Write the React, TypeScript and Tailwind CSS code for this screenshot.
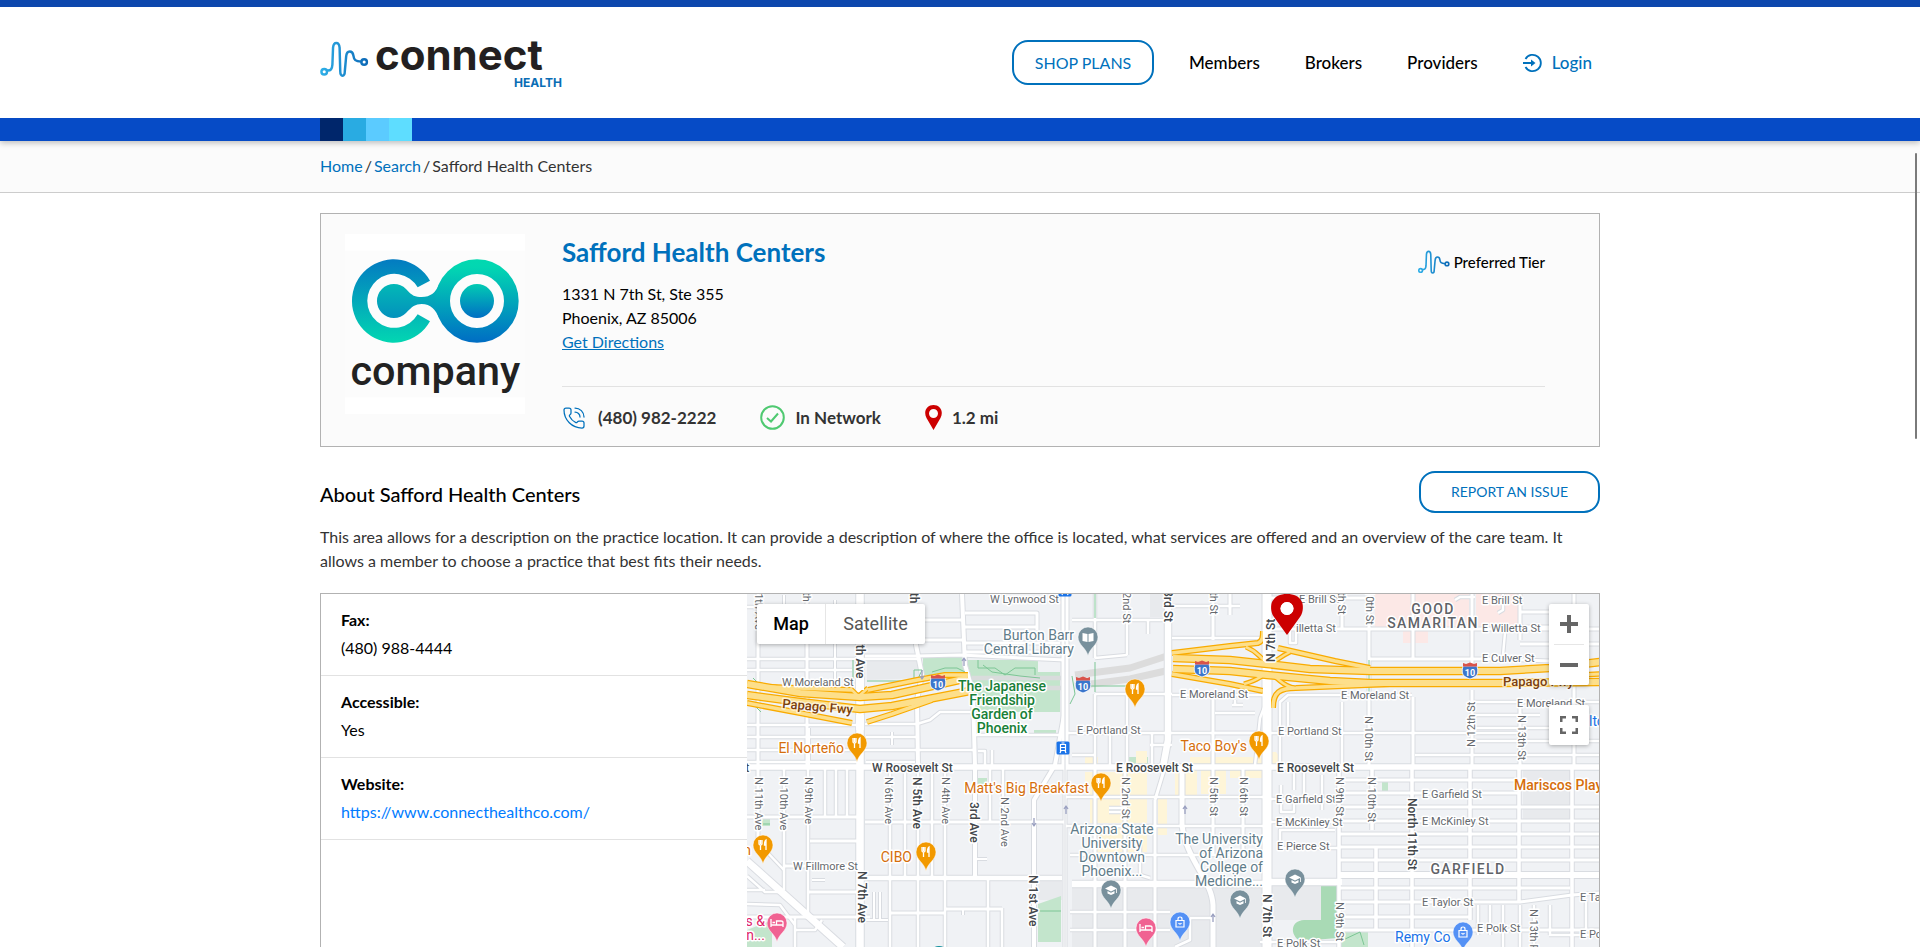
import { PhoneCall } from "lucide-react";

function Wave({ className, id }: { className: string; id: string }) {
  return (
    <svg viewBox="18 26 148 110" className={className} fill="none" aria-hidden="true">
      <defs>
        <linearGradient id={id} gradientUnits="userSpaceOnUse" x1="18" y1="0" x2="166" y2="0">
          <stop offset="0" stopColor="#2fb0e8" />
          <stop offset="1" stopColor="#0b67b5" />
        </linearGradient>
      </defs>
      <g stroke={`url(#${id})`} strokeWidth="7.5" strokeLinecap="round">
        <circle cx="30" cy="120" r="8.500" />
        <circle cx="152" cy="90" r="8.500" />
        <path d="M39 116 C50 117 54 112 55 98 L57 46 C58 36 61 32 67 32 C73 32 76 36 77 46 L79 118 C79 128 81 132 86 132 C91 132 93 128 93 118 L97 74 C98 62 103 58 108 58 C115 58 118 63 119 70 C121 84 125 88 143 89" />
      </g>
    </svg>
  );
}

function CompanyLogo() {
  return (
    <svg viewBox="15 12 540 540" className="size-[180px] shrink-0" role="img" aria-label="Company logo">
      <defs>
        <linearGradient id="down" gradientUnits="userSpaceOnUse" x1="0" y1="88" x2="0" y2="338">
          <stop offset="0" stopColor="#037bc1" />
          <stop offset="1" stopColor="#02d6b2" />
        </linearGradient>
        <linearGradient id="up" gradientUnits="userSpaceOnUse" x1="0" y1="88" x2="0" y2="338">
          <stop offset="0" stopColor="#02d9b0" />
          <stop offset="0.1" stopColor="#02d6b2" />
          <stop offset="1" stopColor="#006dc4" />
        </linearGradient>
        <linearGradient id="dot" gradientUnits="userSpaceOnUse" x1="0" y1="160" x2="0" y2="266">
          <stop offset="0" stopColor="#02cdb3" />
          <stop offset="1" stopColor="#006dc4" />
        </linearGradient>
        <linearGradient id="bridge" gradientUnits="userSpaceOnUse" x1="0" y1="150" x2="0" y2="276">
          <stop offset="0" stopColor="#03bdb6" />
          <stop offset="1" stopColor="#038dbd" />
        </linearGradient>
      </defs>
      <rect x="15" y="12" width="540" height="540" fill="#fff" />
      <rect x="15" y="62" width="540" height="440" fill="#fcfcfc" />
      <path d="M270 152 A125 125 0 1 0 270 274 L233 253 A81 81 0 1 1 233 172 Z" fill="url(#down)" />
      <path
        d="M198 177 C216 198 226 201 245 201 C272 201 288 186 296 164 L300 213 L296 262 C288 240 272 222 245 222 C226 222 216 230 198 249 A51 51 0 1 1 198 177 Z"
        fill="url(#bridge)"
      />
      <circle cx="411" cy="213" r="103" fill="none" stroke="url(#up)" strokeWidth="44" />
      <circle cx="411" cy="213" r="51" fill="url(#dot)" />
      <text x="286" y="464" textAnchor="middle" fontSize="124" className="fill-[#222] font-[Roboto] font-medium">
        company
      </text>
    </svg>
  );
}

type Road = [d: string, width: number];

const roads: Road[] = [
  // avenues west of Central
  ["M758 594V767M758 767V852", 3],
  ["M807 594V767", 3],
  ["M784 767V890M808 767V917M825 767V817M836 767V817M847 767V817", 2.5],
  ["M784 595V640M835 600V680M809 728V767M892 732V745", 2],
  ["M890 767V947M905 767V878M918 767V947M932 767V878M945 767V947M990 767V822M1003 767V822M988 878V947M1002 908V947", 2.5],
  ["M915 594L916 645L922 675L917 700L918 767", 4],
  ["M962 594L965 665L973 692L975 767V878", 4],
  ["M747 607H915M747 659H917M747 670H852M747 725H860M747 737H852M747 750H975M747 762H860", 2.5],
  ["M917 620H962M917 640H962M965 613H1037V630M965 627H1037M965 643H1060M965 652H1065M865 656H917L960 655L1065 660", 3],
  ["M865 724H917L930 720L940 712H975M975 735H1060M866 737H917M866 762H915M992 750V767M978 751H985V767", 2.5],
  ["M747 817H860M865 822H1065M810 841H860M785 866H860M808 892H860M747 917H870M890 913H945M945 909H1002", 3],
  ["M860 878H1062", 4.5],
  ["M747 876L765 892H782M747 890H765M747 904L780 905L795 925M765 850L784 870M795 917V947M795 930H815L822 920", 2.5],
  ["M747 861L843 947", 7],
  ["M862 920H888M874 892V920M880 892V920M812 880H825M963 915V909H990M977 859H987", 2],
  // downtown
  ["M1072 620H1168M1148 620V634M1127 594V655M1127 655L1095 658M1065 733H1340M1340 733H1520M1152 733V765M1095 594V658", 2.5],
  ["M1095 694V767M1127 694V767M1095 694H1172M1072 755H1095M1150 745H1172M1110 733V767", 2.5],
  ["M1034 947V800L1055 765L1065 710", 4],
  ["M1065 767V947M1095 767V947M1125 767V947M1155 800V947M1155 800L1165 767", 3],
  ["M1065 797H1267M1065 826H1267M1070 855H1267M1109 808H1127M1109 812H1127M1070 912H1170M1070 930H1170M1140 845V875L1150 878", 2.5],
  ["M1072 884H1267M1267 882H1342", 6.5],
  ["M1182 767L1182 825C1186 860 1212 880 1213 905V947", 5],
  ["M1213 594V640M1213 695V767M1213 767V855M1243 767V855M1230 594V615", 3],
  ["M1172 638H1260M1172 606H1240M1172 695H1267M1215 713H1255M1215 733H1262M1235 700V705M1232 705H1243M1255 765L1260 718L1267 700", 2.5],
  // east side grid
  ["M1342 594V630M1369 594V767M1413 594V660M1413 697V767M1472 594V670M1472 690V767M1520 594V640M1574 594V767M1520 702V767", 3],
  ["M1267 598H1375M1267 629H1599M1369 659H1500L1549 661M1520 612H1560M1520 627H1560M1520 644H1599", 3],
  ["M1280 767V702L1288 695H1412M1342 702V767M1288 702V730M1472 702H1600M1472 715H1540M1472 728H1549M1472 741H1600M1415 755H1600", 2.5],
  ["M1339 767V947M1372 767V830M1376 847V930M1412 767V947M1470 767V920M1519 767V902M1572 767V902M1572 767V947", 3.5],
  ["M1339 780H1519M1339 793H1519M1339 807H1600M1339 821H1600M1339 834H1600M1339 847H1600M1339 860H1600M1339 888H1570M1339 902H1520L1572 895L1600 893M1339 917H1470M1339 930H1600", 3],
  ["M1339 875H1600", 6],
  ["M1267 799H1339M1267 822H1339M1280 848H1339M1280 848V830H1335M1322 775V810M1304 767V795M1281 785V812H1294V795M1294 767V790", 2.5],
  ["M1478 905V935M1490 905V935M1503 905V947M1520 905V947M1534 905V947M1550 905V935M1586 900V930M1260 942H1340M1549 935H1600M1190 918H1213M1190 918V940L1175 947", 2.5],
  ["M1503 594V610L1498 613M1455 600L1460 597H1475M1505 633L1503 655M1290 630V643H1296V630", 2.5],
  // main arteries
  ["M747 767H1600", 5.5],
  ["M860 594V947", 7.5],
  ["M1065 594V767", 7],
  ["M1168 594V740L1163 767", 6.5],
  ["M1267 594V947", 9],
];

const freeways: Road[] = [
  ["M747 684L800 693L860 697L892 695L968 678", 6],
  ["M747 695L800 702L860 709L892 706L975 690", 6],
  ["M747 703L800 713L852 723", 3.5],
  ["M867 722L892 714L932 700", 3.5],
  ["M770 687L852 690M868 690L917 680L945 675L968 675", 3.5],
  ["M860 695L868 688M860 698L850 688", 2.5],
  ["M1172 653L1230 646L1258 643C1263 641 1263 636 1263 631", 3.5],
  ["M1172 674L1230 684L1263 691", 3.5],
  ["M1278 648L1300 653L1335 661L1370 668", 3.5],
  ["M1273 708C1273 692 1280 688 1296 688L1390 684", 3.5],
  ["M1246 647C1258 652 1258 656 1264 660M1244 684C1258 680 1258 678 1264 675M1290 652C1282 656 1280 658 1275 661M1275 677C1282 682 1284 686 1294 688", 2.5],
  ["M1173 658L1230 660L1267 664L1310 669L1370 671H1500L1550 668L1600 662", 6],
  ["M1173 669L1230 671L1267 675L1330 681L1370 683H1500L1600 682", 6],
  ["M1560 676L1600 674", 3],
];

const areas: [string, string][] = [
  ["#e8eaed", "M867 658H917L921 678L867 680ZM1072 885H1267V947H1072ZM1269 886H1321V920H1269ZM1523 770H1571V819H1523ZM1038 880H1062V900H1038ZM1150 594H1165V617H1150Z"],
  ["#c3e5cc", "M923 657H962L970 675H923ZM967 660H1038V672H1060V712H975L972 690ZM977 778H987V784H977ZM762 819H770V826H762ZM1038 904L1061 896V942H1038ZM1127 757H1148V764H1127ZM1382 782H1388V792H1382ZM1341 931H1368V947H1341ZM747 930L772 920V947H747ZM1034 730H1056V734H1034Z"],
  ["#a9dab5", "M1321 886H1338V938L1300 941C1290 935 1290 921 1304 920H1321Z"],
  ["#fce8e6", "M1375 594H1469V627H1375ZM1476 594H1520V626H1476ZM1403 631H1428V643H1403Z"],
  ["#fef5d8", "M1085 772H1147V795H1085ZM1090 799H1147V823H1090ZM1095 828H1147V852H1095ZM1158 796H1167V835H1158ZM1175 770H1197V795H1175ZM1201 770H1226V794H1201ZM1230 770H1262V778H1230ZM1190 757H1262V764H1190ZM1276 752H1272V764H1285ZM1085 757H1098V764H1085ZM1136 751H1147V763H1136Z"],
];

type Label = [text: string, x: number, y: number];
const smallLabels: Label[] = [
  ["W Lynwood St", 990, 603], ["W Moreland St", 782, 686], ["E Portland St", 1077, 734],
  ["E Moreland St", 1180, 698], ["E Moreland St", 1341, 699], ["E Moreland St", 1517, 707],
  ["E Portland St", 1278, 735], ["E Brill St", 1299, 603], ["illetta St", 1296, 632],
  ["E Brill St", 1482, 604], ["E Willetta St", 1482, 632], ["E Culver St", 1482, 662],
  ["W Fillmore St", 793, 870], ["E Garfield St", 1276, 803], ["E McKinley St", 1276, 826],
  ["E Pierce St", 1277, 850], ["E Garfield St", 1422, 798], ["E McKinley St", 1422, 825],
  ["E Taylor St", 1422, 906], ["E Polk St", 1477, 932], ["E Polk St", 1277, 947], ["E Taylor St", 1580, 901], ["E Polk St", 1580, 938],
];
const smallVertical: Label[] = [
  ["N 11th Ave", 755, 777], ["N 10th Ave", 780, 777], ["N 9th Ave", 805, 777], ["N 6th Ave", 885, 777],
  ["N 4th Ave", 942, 777], ["N 2nd Ave", 1001, 797], ["2nd St", 1123, 592], ["N 2nd St", 1122, 777],
  ["N 5th St", 1210, 777], ["N 6th St", 1240, 777], ["N 9th St", 1336, 777], ["N 10th St", 1368, 777],
  ["5th St", 1210, 586], ["9th St", 1338, 586], ["10th St", 1366, 590], ["N 10th St", 1365, 716], ["N 13th St", 1518, 715],
  ["N 9th St", 1336, 902], ["N 13th Pl", 1530, 909], ["11th Ave", 755, 587], ["9th", 803, 586],
];
const mainLabels: Label[] = [["W Roosevelt St", 872, 772], ["E Roosevelt St", 1116, 772], ["E Roosevelt St", 1277, 772], ["St", 738, 772]];
const mainVertical: Label[] = [
  ["7th Ave", 856, 638], ["N 5th Ave", 913, 777], ["3rd Ave", 970, 802], ["N 7th Ave", 858, 871], ["N 1st Ave", 1029, 875],
  ["3rd St", 1164, 590], ["N 7th St", 1263, 894], ["North 11th St", 1408, 798], ["5th", 910, 586],
];

type Tone = "food" | "school" | "hotel" | "shop" | "library";
const tones: Record<Tone, string> = { food: "#f29900", school: "#78909c", hotel: "#f06292", shop: "#5491f5", library: "#78909c" };
const glyphs: Record<Tone, React.ReactNode> = {
  food: <path d="M-4-5v3.5q0 1.500 1.500 1.500V5M-1-5v3.500q0 1.500-1.500 1.500M-2.500-5v4M3 5V-5q-1.500 1-1.500 5H3" stroke="#fff" strokeWidth="1.300" fill="none" />,
  school: <path d="M-6-1.500L0-4.500L6-1.500L0 1.500ZM-3.500 1V3.500L0 5L3.500 3.500V1L0 2.800ZM5.200-1h.8V3h-.8Z" fill="#fff" />,
  hotel: <path d="M-6-4V4M-6 2H6M6 4V-.5Q6-2 4-2H-.5V2M-4.500-.5h2.500" stroke="#fff" strokeWidth="1.300" fill="none" />,
  shop: <path d="M-4-1.500H4V5H-4ZM-2-1.500V-3Q-2-5 0-5T2-3V-1.500M-1.500 1.200Q0 3 1.500 1.200" stroke="#fff" strokeWidth="1.200" fill="none" />,
  library: <path d="M-5.500-4L-.5-3V5L-5.500 4ZM5.500-4L.5-3V5L5.500 4Z" fill="#fff" />,
};
const markers: [Tone, number, number][] = [
  ["library", 1088, 637], ["food", 1135, 689], ["food", 857, 743], ["food", 1259, 741], ["food", 1101, 783],
  ["food", 763, 845], ["food", 926, 852], ["school", 1111, 890], ["school", 1295, 879], ["school", 1240, 900],
  ["shop", 1180, 922], ["hotel", 777, 923], ["hotel", 1146, 928], ["shop", 1463, 932],
];

type Poi = { fill: string; anchor: "start" | "middle" | "end"; x: number; y: number; lines: string[]; bold?: boolean };
const pois: Poi[] = [
  { fill: "#5f7c8a", anchor: "end", x: 1074, y: 640, lines: ["Burton Barr", "Central Library"] },
  { fill: "#188038", anchor: "middle", x: 1002, y: 691, lines: ["The Japanese", "Friendship", "Garden of", "Phoenix"], bold: true },
  { fill: "#d56e0c", anchor: "end", x: 844, y: 753, lines: ["El Norteño"] },
  { fill: "#d56e0c", anchor: "end", x: 1247, y: 751, lines: ["Taco Boy's"] },
  { fill: "#d56e0c", anchor: "end", x: 1089, y: 793, lines: ["Matt's Big Breakfast"] },
  { fill: "#d56e0c", anchor: "end", x: 912, y: 862, lines: ["CIBO"] },
  { fill: "#d56e0c", anchor: "end", x: 751, y: 855, lines: ["n"] },
  { fill: "#d56e0c", anchor: "start", x: 1514, y: 790, lines: ["Mariscos Playa"], bold: true },
  { fill: "#5f7c8a", anchor: "middle", x: 1112, y: 834, lines: ["Arizona State", "University", "Downtown", "Phoenix..."] },
  { fill: "#5f7c8a", anchor: "end", x: 1263, y: 844, lines: ["The University", "of Arizona", "College of", "Medicine..."] },
  { fill: "#e0246a", anchor: "end", x: 765, y: 926, lines: ["s &", "Inn..."] },
  { fill: "#1a73e8", anchor: "start", x: 1395, y: 942, lines: ["Remy Co"] },
  { fill: "#1a73e8", anchor: "start", x: 1589, y: 726, lines: ["lto"] },
];

const shields: [number, number][] = [[938, 683], [1083, 685], [1202, 669], [1470, 671]];
const stations: [number, number][] = [[1065, 590], [1063, 748]];

function StreetMap() {
  return (
    <svg
      viewBox="747 594 852 353"
      preserveAspectRatio="xMinYMin slice"
      className="absolute inset-0 size-full font-[Roboto]"
      role="img"
      aria-label="Street map of Phoenix"
    >
      <rect x="747" y="594" width="852" height="800" fill="#f0f2f5" />
      {areas.map(([fill, d]) => <path key={fill} d={d} fill={fill} />)}
      <g fill="none" strokeLinejoin="round">
        <path d="M1075 675L1130 668L1170 655M1075 686L1130 679L1170 670" stroke="#dcdcdc" strokeWidth="7" />
        <path d="M972 678H1062M972 688H1062" stroke="#d9dcdc" strokeWidth="4.5" />
        <g stroke="#d9dce1">{roads.map(([d, w], i) => <path key={i} d={d} strokeWidth={w + 2} />)}</g>
        <g stroke="#fff">{roads.map(([d, w], i) => <path key={i} d={d} strokeWidth={w} />)}</g>
        <path
          d="M853 660V680M867 681H917L922 670H914V679M932 672L945 668L957 668L965 672M978 660V668H995L1005 675L1015 668H1035V675M1072 676L1075 694L1070 704M1095 594V618M1095 662V692M1082 686H1127M753 678L760 685M755 706L761 712M1369 660V695M1039 911H1061M762 824H770M1343 940L1360 932L1364 945M980 700L995 705L1010 698L1035 708M983 665L992 672L1020 676L1040 678"
          stroke="#7cc695"
        />
        <g stroke="#f9ab00">{freeways.map(([d, w], i) => <path key={i} d={d} strokeWidth={w + 2.5} />)}</g>
        <g stroke="#fddf8b">{freeways.map(([d, w], i) => <path key={i} d={d} strokeWidth={w} />)}</g>
        <path d="M860 660V690M860 715V730M1267 594V661M1267 682V720" stroke="#fff" strokeWidth="8" />
        <path d="M1065 594V947" stroke="#d6d9df" />
        <path d="M922 670V678M920 676L922 679L924 676M964 666V658M962 661L964 658L966 661M1034 818V826M1032 823L1034 826L1036 823M1066 814V806M1064 809L1066 806L1068 809M1185 814V806M1183 809L1185 806L1187 809M1213 922V914M1211 917L1213 914L1215 917" stroke="#9aa0c0" strokeWidth="1.300" />
      </g>
      <g stroke="#fff" strokeWidth="3" strokeLinejoin="round" className="[paint-order:stroke]">
        <g fontSize="11" className="fill-[#65696e]">
          {smallLabels.map(([t, x, y]) => <text key={`${t}${x}${y}`} x={x} y={y}>{t}</text>)}
          {smallVertical.map(([t, x, y]) => <text key={`${t}${x}${y}`} transform={`translate(${x} ${y}) rotate(90)`}>{t}</text>)}
          <text transform="translate(1475 747) rotate(-90)">N 12th St</text>
        </g>
        <g fontSize="12" className="fill-[#43474b] font-medium">
          {mainLabels.map(([t, x, y]) => <text key={`${t}${x}${y}`} x={x} y={y}>{t}</text>)}
          {mainVertical.map(([t, x, y]) => <text key={`${t}${x}${y}`} transform={`translate(${x} ${y}) rotate(90)`}>{t}</text>)}
          <text transform="translate(1275 662) rotate(-90)">N 7th St</text>
        </g>
        <g fontSize="13" className="fill-[#7b3f10] font-medium" strokeOpacity="0.6">
          <text transform="translate(782 708) rotate(5)">Papago Fwy</text>
          <text x="1503" y="686">Papago Fwy</text>
        </g>
        {pois.map((p) => (
          <text key={`${p.x}${p.y}`} fill={p.fill} textAnchor={p.anchor} fontSize="14" className={p.bold ? "font-medium" : "font-normal"}>
            {p.lines.map((line, i) => <tspan key={line} x={p.x} y={p.y + i * 14}>{line}</tspan>)}
          </text>
        ))}
        <g fontSize="14" textAnchor="middle" className="fill-[#5f6368] font-medium tracking-widest">
          <text x="1433" y="614">GOOD</text>
          <text x="1433" y="628">SAMARITAN</text>
          <text x="1468" y="874">GARFIELD</text>
        </g>
      </g>
      {shields.map(([x, y]) => (
        <g key={x} transform={`translate(${x} ${y})`}>
          <path d="M-7-5Q-9 2-6 5Q-3 7 0 8Q3 7 6 5Q9 2 7-5Z" fill="#3b76cc" stroke="#fff" strokeWidth="0.800" />
          <path d="M-7-8L-4-7L0-8.500L4-7L7-8V-4.500H-7Z" fill="#d9534a" />
          <text y="4.500" textAnchor="middle" fontSize="9" className="fill-white font-bold">10</text>
        </g>
      ))}
      {stations.map(([x, y]) => (
        <g key={y} transform={`translate(${x} ${y})`}>
          <rect x="-6.500" y="-6.500" width="13" height="13" rx="1.500" fill="#1a73e8" />
          <path d="M-2.500-3.500H2.500V2.500H-2.500ZM-2.500-.5H2.500M-2 2.500L-3 5M2 2.500L3 5M-1.500-5H1.500" stroke="#fff" strokeWidth="1.200" fill="none" />
        </g>
      ))}
      {markers.map(([tone, x, y]) => (
        <g key={`${x}${y}`} transform={`translate(${x} ${y})`}>
          <path d="M0 19C-1.500 11-10 8-10 0A10 10 0 0 1 10 0C10 8 1.500 11 0 19Z" fill={tones[tone]} stroke="#fff" strokeOpacity="0.500" />
          {glyphs[tone]}
        </g>
      ))}
      <circle cx="939" cy="956" r="10" fill="#12909c" />
      <path fillRule="evenodd" fill="#c00" d="M1287 635L1274 617C1270 612 1271 604 1272 602C1275 596 1280 594 1287 594S1299 596 1302 602C1303 604 1304 612 1300 617ZM1287 602A6.500 6.500 0 1 0 1287 615A6.500 6.500 0 1 0 1287 602Z" />
      <circle cx="1287" cy="608.5" r="6.500" fill="#fff" />
    </svg>
  );
}

const stripes = ["bg-[#00266b]", "bg-[#29abe2]", "bg-[#5bcbff]", "bg-[#5eddff]"];

export default function App() {
  return (
    <div className="relative flex h-screen min-h-[800px] flex-col overflow-hidden bg-white font-[Lato,sans-serif] text-base leading-6 text-black">
      <header className="relative z-10 border-t-[7px] border-[#0d47ad] bg-white shadow-[0_2px_6px_rgba(0,0,0,0.25)]">
        <div className="mx-auto flex h-[111px] max-w-[1280px] items-center justify-between">
          <a href="#home" className="flex items-start gap-1.5" aria-label="Connect Health">
            <Wave id="wave-lg" className="mt-1.5 h-9 w-[49px]" />
            <span className="flex w-[187px] flex-col font-[Inter,sans-serif] font-bold">
              <span className="text-[42px] leading-10 text-[#231f20]">connect</span>
              <span className="text-right text-xs leading-4 text-[#0a6db5]">HEALTH</span>
            </span>
          </a>
          <nav className="flex items-center gap-[45px] pr-2 text-[17px] font-medium">
            <button type="button" className="-mr-2.5 h-[45px] w-[142px] rounded-2xl border-2 border-[#0071bc] text-base font-normal text-[#0071bc]">
              SHOP PLANS
            </button>
            <a href="#members">Members</a>
            <a href="#brokers">Brokers</a>
            <a href="#providers">Providers</a>
            <a href="#login" className="flex items-center gap-2.5 text-[#0071bc]">
              <svg viewBox="0 0 19 20" className="h-5 w-[19px]" fill="none" stroke="currentColor" strokeWidth="1.800" aria-hidden="true">
                <path d="M2.500 6A8.200 8.200 0 1 1 2.500 14M0 10H9" />
                <path d="M8 6.500L12.500 10L8 13.500Z" fill="currentColor" stroke="none" />
              </svg>
              Login
            </a>
          </nav>
        </div>
        <div className="bg-[#064bc6]">
          <div className="mx-auto flex h-[23px] max-w-[1280px]">
            {stripes.map((c) => <span key={c} className={`w-[23px] ${c}`} />)}
          </div>
        </div>
      </header>

      <div className="border-b border-[#ccc] bg-[#fbfbfb]">
        <nav aria-label="Breadcrumb" className="mx-auto flex h-[51px] max-w-[1280px] items-center gap-0.5 pb-0.5 text-[#333]">
          <a href="#home" className="text-[#0071bc]">Home</a>
          <span>/</span>
          <a href="#search" className="text-[#0071bc]">Search</a>
          <span>/</span>
          <span>Safford Health Centers</span>
        </nav>
      </div>

      <main className="mx-auto flex w-full max-w-[1280px] flex-1 flex-col pt-5">
        <section className="flex gap-[37px] border border-[#b2b2b2] bg-[#fbfbfb] pt-5 pr-[54px] pb-4 pl-6">
          <CompanyLogo />
          <div className="flex-1">
            <div className="flex items-start justify-between">
              <h1 className="text-[26px] leading-9 font-bold text-[#0071bc]">Safford Health Centers</h1>
              <div className="flex items-center gap-1 pt-4 text-[15px] font-medium">
                <Wave id="wave-sm" className="h-6 w-8" />
                Preferred Tier
              </div>
            </div>
            <address className="mt-2 not-italic">
              1331 N 7th St, Ste 355<br />
              Phoenix, AZ 85006<br />
              <a href="#directions" className="text-[#0071bc] underline">Get Directions</a>
            </address>
            <div className="mt-8 flex items-center gap-11 border-t border-[#e2e2e2] pt-[18px] text-[17px] font-bold text-[#333]">
              <span className="flex items-center gap-3">
                <PhoneCall className="size-6 text-[#0071bc]" strokeWidth={1.25} aria-hidden="true" />
                (480) 982-2222
              </span>
              <span className="flex items-center gap-2.5">
                <svg viewBox="0 0 25 25" className="size-[25px]" fill="none" stroke="#4fc971" strokeWidth="2" aria-hidden="true">
                  <circle cx="12.5" cy="12.5" r="11.300" />
                  <path d="M7 13L11 16.500L18 8.500" />
                </svg>
                In Network
              </span>
              <span className="flex items-center gap-2.5">
                <svg viewBox="0 0 17 25" className="h-[25px] w-[17px]" aria-hidden="true">
                  <path fillRule="evenodd" fill="#c00" d="M8.500 25L1.500 13C-2 6 2 0 8.500 0S19 6 15.500 13ZM8.500 4A4.500 4.500 0 1 0 8.500 13A4.500 4.500 0 1 0 8.500 4Z" />
                </svg>
                1.2 mi
              </span>
            </div>
          </div>
        </section>

        <section className="mt-6">
          <div className="flex items-center justify-between">
            <h2 className="pt-1 text-xl font-medium">About Safford Health Centers</h2>
            <button type="button" className="h-[42px] w-[181px] rounded-2xl border-2 border-[#0071bc] text-sm text-[#0071bc]">
              REPORT AN ISSUE
            </button>
          </div>
          <p className="mt-3 text-[#333]">
            This area allows for a description on the practice location. It can provide a description of where the office is located, what services are offered and an overview of the care team. It allows a member to choose a practice that best fits their needs.
          </p>
        </section>

        <section className="mt-5 grid min-h-0 flex-1 grid-cols-[1fr_2fr] border border-b-0 border-[#b2b2b2]">
          <dl className="leading-7 [&>div]:border-b [&>div]:border-[#e2e2e2] [&>div]:px-5 [&>div]:pt-3 [&>div]:pb-[13px] [&_dt]:font-bold">
            <div><dt>Fax:</dt><dd>(480) 988-4444</dd></div>
            <div><dt>Accessible:</dt><dd>Yes</dd></div>
            <div><dt>Website:</dt><dd><a href="https://www.connecthealthco.com/" className="text-[#007bff]">https://www.connecthealthco.com/</a></dd></div>
          </dl>
          <div className="relative overflow-hidden">
            <StreetMap />
            <div className="absolute top-2.5 left-2.5 flex h-10 rounded-xs bg-white font-[Roboto] text-lg shadow-[0_1px_4px_rgba(0,0,0,0.3)]">
              <button type="button" className="w-[69px] border-r border-[#e6e6e6] font-medium">Map</button>
              <button type="button" className="w-[99px] text-[#565656]">Satellite</button>
            </div>
            <div className="absolute top-2.5 right-2.5 flex w-10 flex-col gap-5 text-[#666]">
              <div className="flex flex-col items-center rounded-xs bg-white shadow-[0_1px_4px_rgba(0,0,0,0.3)]">
                <button type="button" aria-label="Zoom in" className="flex size-10 items-center justify-center">
                  <svg viewBox="0 0 18 18" className="size-[18px]" fill="currentColor" aria-hidden="true"><path d="M7 0h4v7h7v4h-7v7H7v-7H0V7h7Z" /></svg>
                </button>
                <span className="h-px w-[30px] bg-[#e6e6e6]" />
                <button type="button" aria-label="Zoom out" className="flex size-10 items-center justify-center">
                  <svg viewBox="0 0 18 18" className="size-[18px]" fill="currentColor" aria-hidden="true"><path d="M0 7h18v4H0Z" /></svg>
                </button>
              </div>
              <button type="button" aria-label="Toggle fullscreen view" className="flex size-10 items-center justify-center rounded-xs bg-white shadow-[0_1px_4px_rgba(0,0,0,0.3)]">
                <svg viewBox="0 0 18 18" className="size-[18px]" fill="none" stroke="currentColor" strokeWidth="2.500" aria-hidden="true">
                  <path d="M1.250 6V1.250H6M12 1.250H16.750V6M16.750 12V16.750H12M6 16.750H1.250V12" />
                </svg>
              </button>
            </div>
          </div>
        </section>
      </main>
      <span className="absolute top-[153px] right-[3px] h-[286px] w-0.5 rounded-full bg-[#7a7a7a]" />
    </div>
  );
}
